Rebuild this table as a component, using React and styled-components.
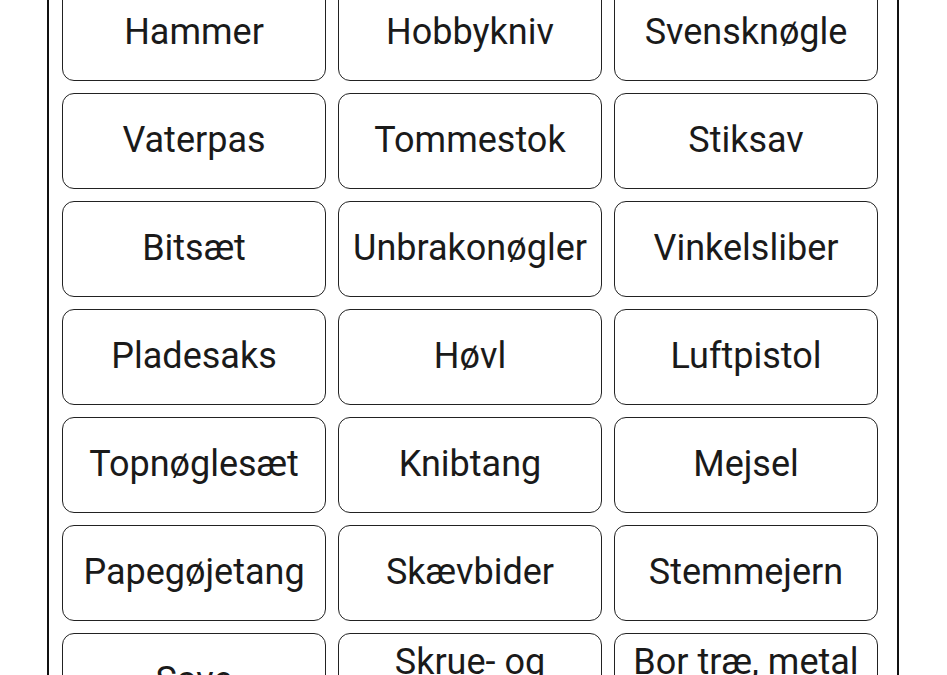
import React from 'react';
import styled, { createGlobalStyle } from 'styled-components';

const GlobalStyle = createGlobalStyle`
  html, body {
    margin: 0;
    padding: 0;
    background: #ffffff;
  }
  body {
    height: 675px;
    overflow: hidden;
    font-family: Roboto, "Liberation Sans", Arial, sans-serif;
  }
`;

const Sheet = styled.div`
  box-sizing: border-box;
  width: 852px;
  height: 675px;
  margin-left: 47px;
  padding: 0 19px 0 13px;
  border-left: 2px solid #111111;
  border-right: 2px solid #111111;
  overflow: hidden;
`;

const Grid = styled.div`
  display: grid;
  grid-template-columns: repeat(3, 264px);
  grid-auto-rows: 96px;
  column-gap: 12px;
  row-gap: 12px;
  margin-top: -15px;
`;

const Card = styled.div`
  box-sizing: border-box;
  display: flex;
  align-items: center;
  justify-content: center;
  padding: 0 6px 2px;
  border: 1px solid #222222;
  border-radius: 12px;
  background: #ffffff;
  color: #1a1a1a;
  font-size: 36px;
  font-weight: 400;
  line-height: ${(p) => (p.$lines > 1 ? '36px' : '43px')};
  text-align: center;
`;

const tools = [
  'Hammer',
  'Hobbykniv',
  'Svensknøgle',
  'Vaterpas',
  'Tommestok',
  'Stiksav',
  'Bitsæt',
  'Unbrakonøgler',
  'Vinkelsliber',
  'Pladesaks',
  'Høvl',
  'Luftpistol',
  'Topnøglesæt',
  'Knibtang',
  'Mejsel',
  'Papegøjetang',
  'Skævbider',
  'Stemmejern',
  'Save',
  'Skrue- og boremaskine',
  'Bor træ, metal og sten',
];

const App = () => {
  return (
    <>
      <GlobalStyle />
      <Sheet>
        <Grid>
          {tools.map((name) => (
            <Card key={name} $lines={name.length > 14 ? 2 : 1}>
              {name}
            </Card>
          ))}
        </Grid>
      </Sheet>
    </>
  );
};

export default App;
